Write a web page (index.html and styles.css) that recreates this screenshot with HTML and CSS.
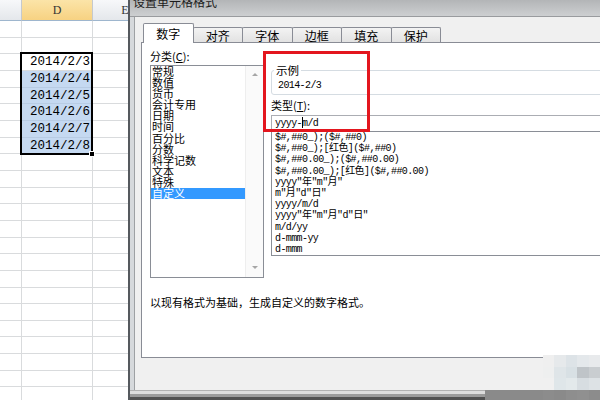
FILE: index.html
```html
<!DOCTYPE html>
<html lang="zh-CN">
<head>
  <meta charset="UTF-8" />
  <title>设置单元格格式</title>
  <link rel="stylesheet" href="styles.css">
</head>
<body>
<div class="screen">

  <div class="sheet">
    <div class="hd"></div>
    <div class="hd hd-sel">D</div>
    <div class="hd hd-e">E</div>

    <div class="cell"></div><div class="cell d"></div><div class="cell"></div>
    <div class="cell"></div><div class="cell d"></div><div class="cell"></div>
    <div class="cell"></div><div class="cell d">2014/2/3</div><div class="cell"></div>
    <div class="cell"></div><div class="cell d hl">2014/2/4</div><div class="cell"></div>
    <div class="cell"></div><div class="cell d hl">2014/2/5</div><div class="cell"></div>
    <div class="cell"></div><div class="cell d hl">2014/2/6</div><div class="cell"></div>
    <div class="cell"></div><div class="cell d hl">2014/2/7</div><div class="cell"></div>
    <div class="cell"></div><div class="cell d hl">2014/2/8</div><div class="cell"></div>
    <div class="cell"></div><div class="cell d"></div><div class="cell"></div>
    <div class="cell"></div><div class="cell d"></div><div class="cell"></div>
    <div class="cell"></div><div class="cell d"></div><div class="cell"></div>
    <div class="cell"></div><div class="cell d"></div><div class="cell"></div>
    <div class="cell"></div><div class="cell d"></div><div class="cell"></div>
    <div class="cell"></div><div class="cell d"></div><div class="cell"></div>
    <div class="cell"></div><div class="cell d"></div><div class="cell"></div>
    <div class="cell"></div><div class="cell d"></div><div class="cell"></div>
    <div class="cell"></div><div class="cell d"></div><div class="cell"></div>
    <div class="cell"></div><div class="cell d"></div><div class="cell"></div>
    <div class="cell"></div><div class="cell d"></div><div class="cell"></div>
    <div class="cell"></div><div class="cell d"></div><div class="cell"></div>
    <div class="cell"></div><div class="cell d"></div><div class="cell"></div>
    <div class="cell"></div><div class="cell d"></div><div class="cell"></div>
    <div class="cell"></div><div class="cell d"></div><div class="cell"></div>

    <div class="sel-box"></div>
  </div>

  <div class="dialog">
    <div class="titlebar"><span>设置单元格格式</span></div>

    <div class="dlg-body">
      <div class="tabs">
        <div class="tab active">数字</div>
        <div class="tab">对齐</div>
        <div class="tab">字体</div>
        <div class="tab">边框</div>
        <div class="tab">填充</div>
        <div class="tab">保护</div>
      </div>

      <div class="panel">
        <div class="panel-grid">
          <div class="col-left">
            <div class="label">分类(<u>C</u>):</div>
            <div class="cat-list">
              <ul class="cat-items">
                <li>常规</li>
                <li>数值</li>
                <li>货币</li>
                <li>会计专用</li>
                <li>日期</li>
                <li>时间</li>
                <li>百分比</li>
                <li>分数</li>
                <li>科学记数</li>
                <li>文本</li>
                <li>特殊</li>
                <li class="sel">自定义</li>
              </ul>
              <div class="scroll">
                <span class="arr up"></span>
                <span class="arr down"></span>
              </div>
            </div>
          </div>

          <div class="col-right">
            <fieldset class="sample">
              <legend>示例</legend>
              <div class="sample-val">2014-2/3</div>
            </fieldset>
            <div class="label type-label">类型(<u>T</u>):</div>
            <div class="type-input">yyyy-<span class="caret"></span>m/d</div>
            <ul class="fmt-list">
              <li>$#,##0_);($#,##0)</li>
              <li>$#,##0_);[红色]($#,##0)</li>
              <li>$#,##0.00_);($#,##0.00)</li>
              <li>$#,##0.00_);[红色]($#,##0.00)</li>
              <li>yyyy"年"m"月"</li>
              <li>m"月"d"日"</li>
              <li>yyyy/m/d</li>
              <li>yyyy"年"m"月"d"日"</li>
              <li>m/d/yy</li>
              <li>d-mmm-yy</li>
              <li>d-mmm</li>
            </ul>
          </div>
        </div>

        <p class="desc">以现有格式为基础，生成自定义的数字格式。</p>

        <div class="mark"></div>
      </div>
    </div>

    <div class="dlg-bottom"></div>
  </div>

  <div class="strip"></div>
  <div class="mosaic">
    <i style="background:#efefef"></i><i style="background:#e6e9eb"></i><i style="background:#dde3e7"></i><i style="background:#e4e8eb"></i><i style="background:#e8eaec"></i>
    <i style="background:#eeefef"></i><i style="background:#dfe5e8"></i><i style="background:#d8e0e4"></i><i style="background:#bfc4c8"></i><i style="background:#c9cdd0"></i>
    <i style="background:#f0f0f0"></i><i style="background:#dfe6e9"></i><i style="background:#e3e9eb"></i><i style="background:#d7dde1"></i><i style="background:#dde2e5"></i>
    <i style="background:#8c8c8c"></i><i style="background:#8a8a8a"></i><i style="background:#8e8e8e"></i><i style="background:#909090"></i><i style="background:#8c8c8c"></i>
  </div>

</div>
</body>
</html>
```

FILE: styles.css
```css
body {
  margin: 0;
  font-family: "Noto Sans CJK SC", "Noto Sans", sans-serif;
  font-size: 11px;
  color: #000;
  background: #fff;
  overflow: hidden;
}

.screen {
  position: relative;
  display: flex;
  width: 600px;
  height: 400px;
  overflow: hidden;
}

/* spreadsheet behind the dialog */

.sheet {
  position: relative;
  flex: none;
  width: 128px;
  height: 400px;
  overflow: hidden;
  display: grid;
  grid-template-columns: 22px 71px 65px;
  grid-template-rows: 21px;
  grid-auto-rows: 16.67px;
  align-content: start;
}

.hd {
  box-sizing: border-box;
  background: linear-gradient(#f7f8fa, #e4e7eb);
  border-right: 1px solid #c5c9ce;
  border-bottom: 1px solid #9eb6ce;
  font: 12px "Liberation Serif", serif;
  color: #333;
  text-align: center;
  line-height: 20px;
}

.hd-sel {
  background: linear-gradient(#fbe4a8, #f7d282);
}

.cell {
  box-sizing: border-box;
  border-right: 1px solid #d9dbdd;
  border-bottom: 1px solid #d9dbdd;
}

.cell.d {
  font: 12.5px "Liberation Mono", monospace;
  text-align: right;
  padding-right: 2px;
  line-height: 17px;
}

.cell.hl {
  background: #c5d9f1;
  border-bottom-color: #b8cce4;
}

.sel-box {
  position: absolute;
  left: 20px;
  top: 52px;
  width: 73px;
  height: 103px;
  box-sizing: border-box;
  border: 2px solid #000;
}

.sel-box::after {
  content: "";
  position: absolute;
  right: -4px;
  bottom: -4px;
  width: 4px;
  height: 4px;
  background: #000;
  border: 1px solid #fff;
}

/* dialog */

.dialog {
  flex: none;
  width: 490px;
  height: 400px;
  box-sizing: border-box;
  border-left: 2px solid #55595e;
  background: #d6d9dc;
  display: flex;
  flex-direction: column;
}

.titlebar {
  flex: none;
  height: 17px;
  box-sizing: border-box;
  padding-left: 3px;
  background: linear-gradient(#b3b5b7, #cdcfd1);
  border-bottom: 1px solid #999b9e;
  overflow: hidden;
}

.titlebar span {
  display: block;
  margin-top: -4px;
  font-size: 12px;
  line-height: 12px;
  color: #1c1c1c;
}

.dlg-body {
  flex: none;
  height: 373px;
  box-sizing: border-box;
  margin-left: 4px;
  border-left: 1px solid #9ea1a4;
  background: #f0f0f0;
  padding: 6px 0 0 6px;
}

.dlg-bottom {
  flex: 1;
  background: linear-gradient(#b0b0b0 0 1px, #dcdcdc 1px 4px, #9a9a9a 4px 7px, #505050 7px);
}

.tabs {
  display: flex;
  align-items: flex-end;
  height: 19px;
  padding-left: 2px;
}

.tab {
  position: relative;
  width: 50.5px;
  height: 15px;
  box-sizing: border-box;
  margin-right: -1px;
  border: 1px solid #898c95;
  border-bottom: none;
  border-radius: 2px 2px 0 0;
  background: linear-gradient(#f3f3f3, #e2e2e2);
  font-size: 12px;
  line-height: 15px;
  text-align: center;
}

.tab.active {
  z-index: 1;
  height: 20px;
  margin-bottom: -1px;
  background: #fff;
  line-height: 19px;
}

.panel {
  position: relative;
  height: 316px;
  box-sizing: border-box;
  border: 1px solid #898c95;
  background: #fff;
  padding: 7px 0 0 8px;
}

.panel-grid {
  display: grid;
  grid-template-columns: 114px 1fr;
  column-gap: 7px;
}

.label {
  line-height: 12px;
  margin-bottom: 3px;
}

.cat-list {
  display: flex;
  height: 213px;
  box-sizing: border-box;
  border: 1px solid #8a8e96;
}

.cat-items {
  flex: 1;
  margin: 0;
  padding: 0;
  list-style: none;
}

.cat-items li {
  height: 11.1px;
  line-height: 11px;
  padding-left: 1px;
  white-space: nowrap;
}

.cat-items li.sel {
  background: #3399ff;
  color: #fff;
}

.scroll {
  width: 17px;
  background: #fafafa;
  border-left: 1px solid #eeeeee;
  display: flex;
  flex-direction: column;
  justify-content: space-between;
  align-items: center;
  padding: 7px 0 8px;
}

.arr {
  width: 0;
  height: 0;
  border-left: 3px solid transparent;
  border-right: 3px solid transparent;
}

.arr.up {
  border-bottom: 3px solid #a6a6a6;
}

.arr.down {
  border-top: 3px solid #a6a6a6;
}

.sample {
  margin: 14px 0 0;
  padding: 4px 6px 2px;
  border: 1px solid #d5dce2;
  border-radius: 3px;
  min-width: 0;
}

.sample legend {
  margin-left: -4px;
  padding: 0 2px;
  font-size: 11.5px;
  line-height: 12px;
}

.sample-val,
.type-input,
.fmt-list {
  font-family: "Liberation Mono", "Noto Sans CJK SC", monospace;
  font-size: 10px;
  letter-spacing: -0.6px;
}

.sample-val {
  line-height: 12px;
}

.type-label {
  margin: 4px 0 4px;
}

.type-input {
  height: 16px;
  box-sizing: border-box;
  border: 1px solid #abadb3;
  border-bottom: none;
  padding-left: 3px;
  line-height: 15px;
}

.caret {
  display: inline-block;
  width: 1px;
  height: 11px;
  margin: 0 -1px 0 0;
  background: #000;
  vertical-align: -2px;
}

.fmt-list {
  height: 125px;
  box-sizing: border-box;
  margin: 0;
  padding: 0 0 0 3px;
  list-style: none;
  border: 1px solid #8a8e96;
  overflow: hidden;
}

.fmt-list li {
  height: 11.2px;
  line-height: 11px;
  white-space: nowrap;
}

.desc {
  margin: 17px 0 0;
  line-height: 14px;
}

.mark {
  position: absolute;
  left: 121px;
  top: 8px;
  width: 107px;
  height: 81px;
  box-sizing: border-box;
  border: 3px solid #e3161e;
}

/* pixelated watermark in the lower right corner */

.strip {
  position: absolute;
  left: 485px;
  bottom: 0;
  width: 60px;
  height: 10px;
  background: #8a8a8a;
}

.mosaic {
  position: absolute;
  right: 0;
  bottom: 0;
  width: 57px;
  height: 45px;
  display: grid;
  grid-template-columns: repeat(5, 1fr);
  grid-template-rows: 12px 11px 12px 10px;
}
```
